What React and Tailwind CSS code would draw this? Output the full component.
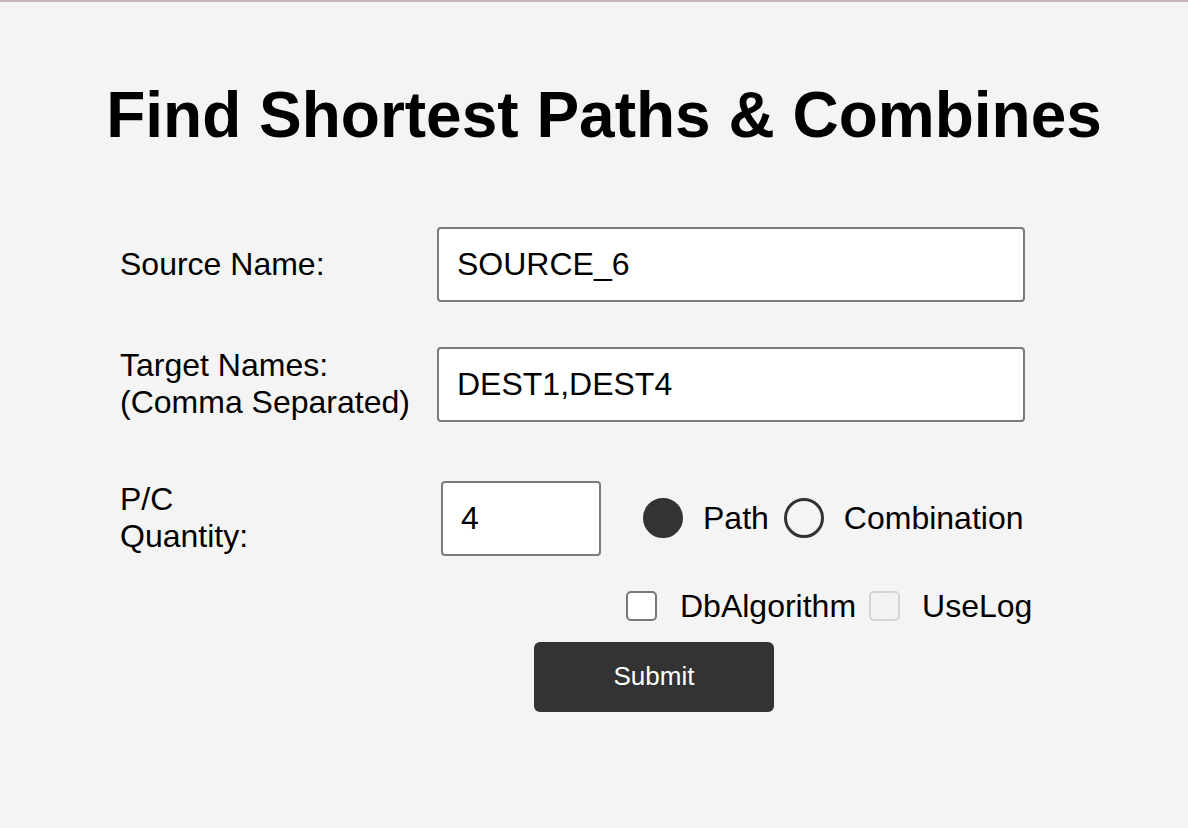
import { useState } from "react";

const font = { fontFamily: '"Liberation Sans", Arial, Helvetica, sans-serif' };

const App = () => {
  const [source, setSource] = useState("SOURCE_6");
  const [targets, setTargets] = useState("DEST1,DEST4");
  const [qty, setQty] = useState("4");
  const [mode, setMode] = useState("path");
  const [dbAlgo, setDbAlgo] = useState(false);

  return (
    <div
      className="min-h-screen w-full bg-[#f4f4f4] border-t-2 border-[#c8b4bc] text-black"
      style={font}
    >
      <h1 className="pt-[77px] pl-[20px] text-center text-[64px] font-bold leading-[1.15]">
        Find Shortest Paths &amp; Combines
      </h1>

      <div className="pl-[120px] pt-[74px] flex flex-col">
        {/* source */}
        <div className="flex items-center">
          <label className="w-[317px] text-[32px] leading-[1.15]">Source Name:</label>
          <input
            className="w-[588px] h-[75px] bg-white border-2 border-[#7b7b7b] rounded-[4px] pl-[18px] text-[32px] outline-none"
            value={source}
            onChange={(e) => setSource(e.target.value)}
          />
        </div>

        {/* targets */}
        <div className="flex items-center mt-[45px]">
          <label className="w-[317px] text-[32px] leading-[1.15]">
            Target Names:
            <br />
            (Comma Separated)
          </label>
          <input
            className="w-[588px] h-[75px] bg-white border-2 border-[#7b7b7b] rounded-[4px] pl-[18px] text-[32px] outline-none"
            value={targets}
            onChange={(e) => setTargets(e.target.value)}
          />
        </div>

        {/* quantity + mode */}
        <div className="flex items-center mt-[59px]">
          <label className="w-[321px] text-[32px] leading-[1.15]">
            P/C
            <br />
            Quantity:
          </label>
          <input
            className="w-[160px] h-[75px] bg-white border-2 border-[#7b7b7b] rounded-[4px] pl-[18px] text-[32px] outline-none"
            value={qty}
            onChange={(e) => setQty(e.target.value)}
          />
          <div className="flex items-center ml-[42px] text-[32px]">
            <button
              className="w-[40px] h-[40px] rounded-full border-[3px] border-[#333] bg-[#333]"
              onClick={() => setMode("path")}
              style={mode === "path" ? {} : { background: "transparent" }}
            />
            <span className="ml-[20px]">Path</span>
            <button
              className="ml-[15px] w-[40px] h-[40px] rounded-full border-[3px] border-[#333]"
              onClick={() => setMode("combination")}
              style={mode === "combination" ? { background: "#333" } : {}}
            />
            <span className="ml-[20px]">Combination</span>
          </div>
        </div>

        {/* flags */}
        <div className="flex items-center mt-[26px] ml-[506px] text-[32px]">
          <button
            className="w-[31px] h-[30px] rounded-[5px] border-2 border-[#777] bg-white"
            onClick={() => setDbAlgo(!dbAlgo)}
          >
            {dbAlgo && <span className="block text-[22px] leading-none">✓</span>}
          </button>
          <span className="ml-[23px]">DbAlgorithm</span>
          <div className="ml-[13px] w-[31px] h-[30px] rounded-[5px] border-2 border-[#d4d4d4] bg-[#f2f2f2]" />
          <span className="ml-[22px]">UseLog</span>
        </div>

        <div className="mt-[12px] ml-[414px]">
          <button className="w-[240px] h-[70px] rounded-[6px] bg-[#333] text-white text-[26px]">
            Submit
          </button>
        </div>
      </div>
    </div>
  );
};

export default App;
